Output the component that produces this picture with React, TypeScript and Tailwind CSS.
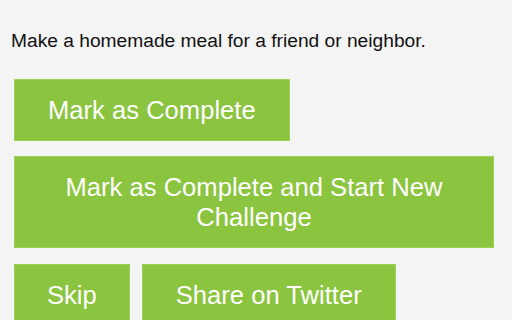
import React from 'react';

const btn =
  'border border-[#9ccf55] bg-[#8bc53f] py-[15px] text-[25.6px] leading-[30px] text-white text-center';

const App: React.FC = () => {
  return (
    <div className="min-h-[320px] w-[512px] overflow-hidden bg-[#f4f4f4] font-['Liberation_Sans',Arial,sans-serif]">
      <p className="pl-[11px] pt-[30px] text-[19.2px] leading-[1.15] text-[#111]">
        Make a homemade meal for a friend or neighbor.
      </p>

      {/* Actions */}
      <div className="mt-[27px] flex flex-col items-start gap-[15px] pl-[14px]">
        <button className={`${btn} px-[33px]`}>Mark as Complete</button>
        <button className={`${btn} w-[480px] px-[33px]`}>
          Mark as Complete and Start New Challenge
        </button>
        <div className="mt-[1px] flex gap-[12px]">
          <button className={`${btn} px-[32px]`}>Skip</button>
          <button className={`${btn} px-[33px]`}>Share on Twitter</button>
        </div>
      </div>
    </div>
  );
};

export default App;
